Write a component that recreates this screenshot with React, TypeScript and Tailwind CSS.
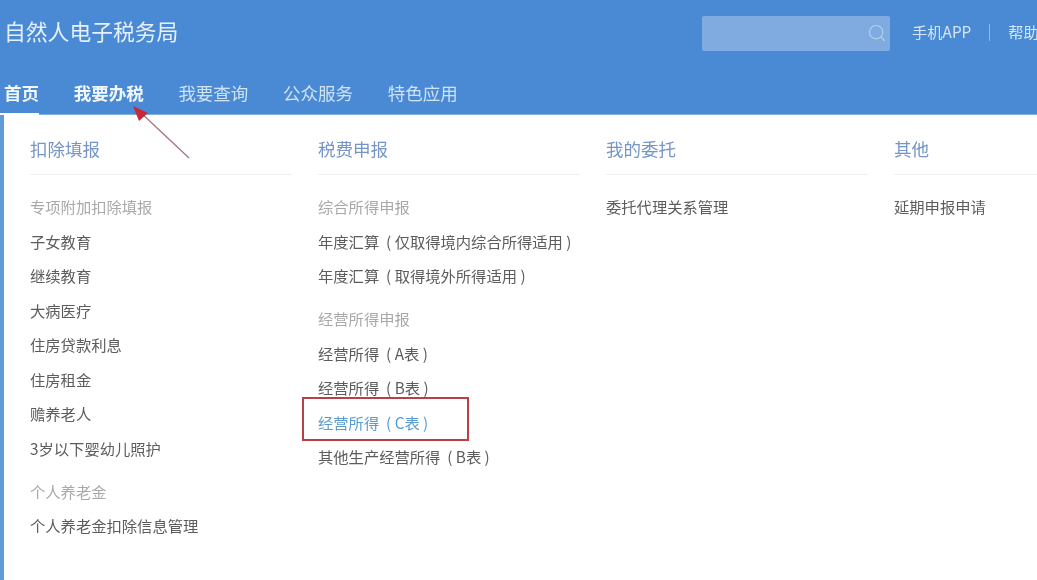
import { Search } from "lucide-react";

const navItems = ["首页", "我要办税", "我要查询", "公众服务", "特色应用"];

type Item = { text: string; kind?: "group" | "active" };

const columns: { title: string; items: Item[] }[] = [
  {
    title: "扣除填报",
    items: [
      { text: "专项附加扣除填报", kind: "group" },
      { text: "子女教育" },
      { text: "继续教育" },
      { text: "大病医疗" },
      { text: "住房贷款利息" },
      { text: "住房租金" },
      { text: "赡养老人" },
      { text: "3岁以下婴幼儿照护" },
      { text: "个人养老金", kind: "group" },
      { text: "个人养老金扣除信息管理" },
    ],
  },
  {
    title: "税费申报",
    items: [
      { text: "综合所得申报", kind: "group" },
      { text: "年度汇算  ( 仅取得境内综合所得适用 )" },
      { text: "年度汇算  ( 取得境外所得适用 )" },
      { text: "经营所得申报", kind: "group" },
      { text: "经营所得  ( A表 )" },
      { text: "经营所得  ( B表 )" },
      { text: "经营所得  ( C表 )", kind: "active" },
      { text: "其他生产经营所得  ( B表 )" },
    ],
  },
  {
    title: "我的委托",
    items: [{ text: "委托代理关系管理" }],
  },
  {
    title: "其他",
    items: [{ text: "延期申报申请" }],
  },
];

function MenuRow({ item, first }: { item: Item; first: boolean }) {
  if (item.kind === "group") {
    return <div className={`h-[34.5px] leading-[34.5px] text-[15.3px] text-[#a9a9a9] ${first ? "" : "mt-[8.5px]"}`}>{item.text}</div>;
  }
  if (item.kind === "active") {
    return (
      <div className="relative h-[34.5px] leading-[34.5px] text-[15.3px] text-[#5a9bd0] whitespace-pre">
        {item.text}
        <div className="absolute left-[-16px] top-[-8px] w-[167px] h-[44px] border-2 border-[#bd3f46]" />
      </div>
    );
  }
  return <div className="h-[34.5px] leading-[34.5px] text-[15.3px] text-[#5c5c5c] whitespace-pre">{item.text}</div>;
}

export default function App() {
  return (
    <div className="relative w-[1037px] h-[580px] overflow-hidden bg-white font-['Noto_Sans_CJK_SC','Liberation_Sans',sans-serif] blur-[0.4px]">
      <header className="h-[115px] bg-[#4a8ad4] border-b border-[#7db4e6] flex flex-col">
        <div className="flex items-center h-[66px] pl-[4px]">
          <div className="text-[21.8px] text-[#e6f0fa] whitespace-nowrap mt-[-3px]">自然人电子税务局</div>
          <div className="ml-auto flex items-center shrink-0 w-[335px]">
            <div className="flex items-center justify-end shrink-0 w-[188px] h-[35px] rounded-[2px] bg-[#7fabe0] pr-[3px]">
              <Search size={20} strokeWidth={1.4} className="text-[#b4d0ee]" />
            </div>
            <div className="ml-[22px] mt-[-3px] shrink-0 text-[15.3px] text-[#d4e5f7] whitespace-nowrap">手机APP</div>
            <div className="ml-[18px] mt-[-2px] shrink-0 w-px h-[17px] bg-[#8dbbe8]" />
            <div className="ml-[18px] mt-[-3px] shrink-0 text-[15.3px] text-[#d4e5f7] whitespace-nowrap">帮助中心</div>
          </div>
        </div>
        <nav className="flex gap-[34.7px] pl-[4px] h-[48px] text-[17.5px] whitespace-nowrap">
          {navItems.map((name, i) => (
            <div
              key={name}
              className={`h-full leading-[54px] ${i < 2 ? "font-bold text-[#f2f7fc]" : "text-[#cfe2f6]"}`}
            >
              {name}
            </div>
          ))}
        </nav>
      </header>

      <main className="flex h-[465px] border-l-[4px] border-[#5f9ad9] pl-[26px]">
        {columns.map((col) => (
          <section key={col.title} className="shrink-0 w-[288px] pr-[26px]">
            <h2 className="h-[60px] leading-[68px] text-[17.5px] text-[#7595c6] border-b border-[#efefef]">{col.title}</h2>
            <div className="pt-[14px]">
              {col.items.map((item, i) => (
                <MenuRow key={item.text} item={item} first={i === 0} />
              ))}
            </div>
          </section>
        ))}
      </main>

      <div className="absolute left-0 top-[113px] w-[39px] h-[2px] bg-white" />
      <svg className="absolute left-[125px] top-[100px]" width="70" height="62" viewBox="0 0 70 62" fill="none">
        <path d="M14 11 L64 58" stroke="#a8727c" strokeWidth="1.2" />
        <path d="M8 6 L23 13 L14 21 Z" fill="#c9283a" />
      </svg>
    </div>
  );
}
